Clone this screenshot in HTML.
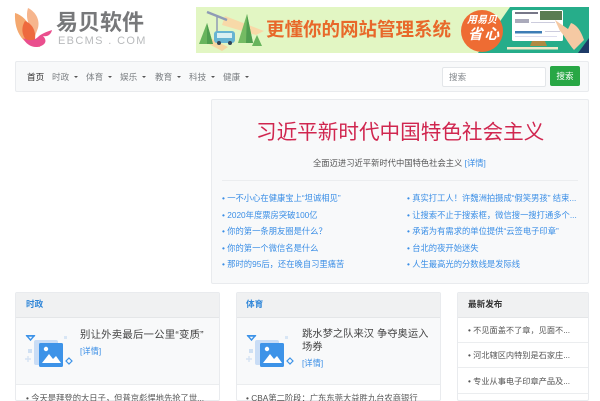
<!DOCTYPE html>
<html lang="zh-CN"><head><meta charset="utf-8"><title>易贝软件</title>
<style>
html,body{margin:0;padding:0;width:600px;height:401px;overflow:hidden;background:#fff}
body{position:relative;font-family:"Liberation Sans","Noto Sans CJK SC",sans-serif;font-size:8.3px;color:#212529;filter:blur(.25px)}
.a{position:absolute;white-space:nowrap;line-height:12px}
.box{position:absolute;box-sizing:border-box;border:1px solid #e9ebee;border-radius:2px;background:#f8f9fa;overflow:hidden}
.n{color:#7b7f83;font-size:8.6px;top:71px}
.n i{display:inline-block;width:0;height:0;border:2.2px solid transparent;border-top:2.6px solid #555;border-bottom:0;margin-left:5px;vertical-align:2px}
.l{color:#3a8ee6}
.g{color:#555}
.t{font-size:8.6px;font-weight:700;top:298px}
.hd{position:absolute;box-sizing:border-box;background:#f0f1f2;border-bottom:1px solid #e4e6e8;height:25px;left:0;right:0;top:0}
.w{position:absolute;background:#fff;height:30px;left:0;right:0;top:91px;border-top:1px solid #ebedef}
.sep{position:absolute;height:1px;background:#ebedef}
</style></head><body>

<svg class="a" style="left:14px;top:8px" width="39" height="40" viewBox="0 0 39 40">
<path d="M1 5C8 7 14 13 18 22C20 29 22 34 26 39C10 38 0 25 1 5Z" fill="#f4a86f"/>
<path d="M14 0C22 4 26 12 24 20L21 28C15 19 11 10 14 0Z" fill="#f6b58d"/>
<path d="M11 13C19 16 22 24 21 31L18 37C8 31 6 21 11 13Z" fill="#ee6a3e"/>
<path d="M38 22C37 27 33 29 29 28C33 32 32 36 27 38C20 41 12 37 9 30C14 33 20 33 24 29C27 26 32 24 38 22Z" fill="#ea4f8e"/>
</svg>
<div class="a" style="left:56px;top:10px;font-size:22px;line-height:26px;font-weight:700;color:#77787a">易贝软件</div>
<div class="a" style="left:58px;top:34px;font-size:11px;line-height:14px;color:#b8babc;letter-spacing:1.35px">EBCMS . COM</div>

<div class="a" style="left:196px;top:7px;width:393px;height:46px;overflow:hidden;background:#e2f6c3">
<svg style="position:absolute;left:0;top:0" width="393" height="46" viewBox="0 0 393 46">
<path d="M29 9L68 24L60 28L26 18Z" fill="#f8d9a8"/>
<path d="M9 35L14 31L32 40L26 44Z" fill="#f6d6a0"/>
<path d="M11 5L31 13" stroke="#8f9bb5" stroke-width="2.5"/><path d="M21 8V25" stroke="#8f9bb5" stroke-width="1.5"/>
<path d="M3 37L11 16L17 37Z" fill="#68b45d"/><path d="M11 16L17 37H11Z" fill="#4f9e50"/>
<path d="M42 36L51 7L57 36Z" fill="#74bb63"/><path d="M51 7L57 36H50Z" fill="#4f9e50"/>
<path d="M56 39L61 28L66 39Z" fill="#68b45d"/>
<rect x="18" y="24" width="21" height="12" rx="3" fill="#66b4d2"/><rect x="21" y="26" width="15" height="5" fill="#d9f0f2"/>
<circle cx="23" cy="36" r="2" fill="#345"/><circle cx="34" cy="36" r="2" fill="#345"/>
<path d="M314 0H393V46H282Z" fill="#26ad8a"/>
<rect x="316" y="3" width="51" height="31" rx="1.5" fill="#fff"/>
<rect x="319" y="5" width="23" height="2" fill="#778"/><rect x="344" y="4" width="22" height="9" fill="#5a7c52"/>
<rect x="319" y="12" width="14" height="4" fill="#aab"/><rect x="335" y="15" width="24" height="1" fill="#ccd"/>
<rect x="319" y="24" width="27" height="2.5" fill="#3d7db5"/><rect x="349" y="24" width="15" height="1" fill="#ccd"/><rect x="319" y="29" width="42" height="1" fill="#dde"/>
<path d="M336 34H349L351 39H334Z" fill="#b08a42"/><rect x="311" y="40" width="51" height="2.5" fill="#f2e8c8"/>
<path d="M359 13L372 22L375 16C381 18 385 24 388 33L378 43C372 36 368 28 364 24Z" fill="#f5c9a3"/>
<path d="M393 31V46H382Z" fill="#1e3b68"/>
<circle cx="286" cy="24" r="21" fill="#ee6c33"/>
</svg>
<div class="a" style="left:70px;top:9px;font-size:18.5px;line-height:28px;font-weight:700;color:#e8682a">更懂你的网站管理系统</div>
<div class="a" style="left:271px;top:8px;font-size:10px;line-height:11px;color:#fff;font-style:italic;font-weight:700">用易贝</div>
<div class="a" style="left:272px;top:19px;font-size:14.5px;line-height:18px;color:#fff;font-weight:700;letter-spacing:2px;font-style:italic">省心</div>
</div>

<div class="box" style="left:15px;top:61px;width:574px;height:31px"></div>
<div class="a" style="left:27px;top:71px;font-size:8.6px;color:#333">首页</div>
<div class="a n" style="left:52px">时政<i></i></div>
<div class="a n" style="left:86px">体育<i></i></div>
<div class="a n" style="left:120px">娱乐<i></i></div>
<div class="a n" style="left:155px">教育<i></i></div>
<div class="a n" style="left:189px">科技<i></i></div>
<div class="a n" style="left:223px">健康<i></i></div>
<div class="a" style="left:442px;top:67px;width:104px;height:20px;box-sizing:border-box;background:#fff;border:1px solid #e3e6e9;border-radius:2px;color:#80858a;line-height:18px;padding-left:6px;font-size:8.6px">搜索</div>
<div class="a" style="left:550px;top:66px;width:30px;height:20px;background:#28a745;border-radius:2px;color:#fff;line-height:21px;text-align:center;font-size:8.6px">搜索</div>

<div class="box" style="left:211px;top:99px;width:378px;height:185px"></div>
<div class="a" style="left:256px;top:118px;font-size:20.6px;line-height:30px;color:#d0264f">习近平新时代中国特色社会主义</div>
<div class="a g" style="left:313px;top:157px;font-size:8.3px">全面迈进习近平新时代中国特色社会主义 <span class="l">[详情]</span></div>
<div class="sep" style="left:222px;top:180px;width:356px"></div>
<div class="a l" style="left:222px;top:192px">• 一不小心在健康宝上“坦诚相见”</div>
<div class="a l" style="left:222px;top:209px">• 2020年度票房突破100亿</div>
<div class="a l" style="left:222px;top:225px">• 你的第一条朋友圈是什么？</div>
<div class="a l" style="left:222px;top:242px">• 你的第一个微信名是什么</div>
<div class="a l" style="left:222px;top:258px">• 那时的95后，还在晚自习里痛苦</div>
<div class="a l" style="left:407px;top:192px">• 真实打工人！许魏洲拍摄成“假笑男孩” 结束...</div>
<div class="a l" style="left:407px;top:209px">• 让搜索不止于搜索框，微信搜一搜打通多个...</div>
<div class="a l" style="left:407px;top:225px">• 承诺为有需求的单位提供“云签电子印章”</div>
<div class="a l" style="left:407px;top:242px">• 台北的夜开始迷失</div>
<div class="a l" style="left:407px;top:258px">• 人生最高光的分数线是发际线</div>

<div class="box" style="left:15px;top:292px;width:205px;height:109px"><div class="hd"></div><div class="w"></div></div>
<div class="a t" style="left:26px;color:#2f86d8">时政</div>
<svg class="a" style="left:24px;top:331px" width="50" height="38" viewBox="0 0 50 38">
<path d="M3 5H10L6.500 9Z" fill="none" stroke="#3d93e8" stroke-width="1.4"/><rect x="2" y="4" width="9" height="1.5" fill="#3d93e8"/>
<rect x="40" y="5" width="3" height="3" fill="#d8e6f5"/><rect x="4" y="18" width="4" height="4" fill="#cfe0f3"/>
<path d="M4 25V31M1 28H7" stroke="#d5e3f3" stroke-width="1.4"/>
<rect x="10" y="9" width="24" height="25" rx="2" fill="#c9ddf6"/>
<rect x="15" y="12" width="24" height="24" rx="1.5" fill="#3d93e8"/>
<circle cx="22" cy="18" r="2.2" fill="#fff"/><path d="M18 32L25 23L29 28L32 25L37 32Z" fill="#fff"/>
<path d="M45 27L48 30L45 33L42 30Z" fill="none" stroke="#3d93e8" stroke-width="1.2"/>
</svg>
<div class="a" style="left:80px;top:328px;font-size:10.4px;line-height:15px;color:#444;letter-spacing:.2px">别让外卖最后一公里“变质”</div>
<div class="a l" style="left:80px;top:345px">[详情]</div>
<div class="a g" style="left:26px;top:392px">• 今天是拜登的大日子，但普京彪悍地先抢了世...</div>

<div class="box" style="left:236px;top:292px;width:205px;height:109px"><div class="hd"></div><div class="w"></div></div>
<div class="a t" style="left:246px;color:#2f86d8">体育</div>
<svg class="a" style="left:245px;top:331px" width="50" height="38" viewBox="0 0 50 38">
<path d="M3 5H10L6.500 9Z" fill="none" stroke="#3d93e8" stroke-width="1.4"/><rect x="2" y="4" width="9" height="1.5" fill="#3d93e8"/>
<rect x="40" y="5" width="3" height="3" fill="#d8e6f5"/><rect x="4" y="18" width="4" height="4" fill="#cfe0f3"/>
<path d="M4 25V31M1 28H7" stroke="#d5e3f3" stroke-width="1.4"/>
<rect x="10" y="9" width="24" height="25" rx="2" fill="#c9ddf6"/>
<rect x="15" y="12" width="24" height="24" rx="1.5" fill="#3d93e8"/>
<circle cx="22" cy="18" r="2.2" fill="#fff"/><path d="M18 32L25 23L29 28L32 25L37 32Z" fill="#fff"/>
<path d="M45 27L48 30L45 33L42 30Z" fill="none" stroke="#3d93e8" stroke-width="1.2"/>
</svg>
<div class="a" style="left:302px;top:328px;font-size:10.3px;line-height:13px;color:#444">跳水梦之队来汉 争夺奥运入<br>场券</div>
<div class="a l" style="left:302px;top:357px">[详情]</div>
<div class="a g" style="left:246px;top:392px">• CBA第二阶段：广东东莞大益胜九台农商银行</div>

<div class="box" style="left:457px;top:292px;width:132px;height:109px;background:#fff"><div class="hd"></div></div>
<div class="a t" style="left:468px;color:#333">最新发布</div>
<div class="a g" style="left:468px;top:325px;font-size:8.2px">• 不见面盖不了章，见面不...</div>
<div class="sep" style="left:458px;top:342px;width:130px"></div>
<div class="a g" style="left:468px;top:350px;font-size:8.2px">• 河北辖区内特别是石家庄...</div>
<div class="sep" style="left:458px;top:367px;width:130px"></div>
<div class="a g" style="left:468px;top:376px;font-size:8.2px">• 专业从事电子印章产品及...</div>
<div class="sep" style="left:458px;top:393px;width:130px"></div>
</body></html>
